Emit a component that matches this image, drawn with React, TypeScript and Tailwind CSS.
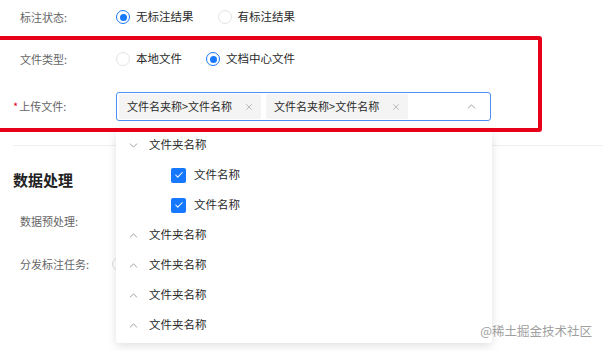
import React from 'react';
import { ChevronDown, ChevronUp, X, Check } from 'lucide-react';

const font = { fontFamily: '"Noto Sans CJK SC", "Noto Sans", sans-serif' };

const Radio = ({ checked, label }: { checked?: boolean; label: string }) => (
  <div className="flex items-center mr-6">
    <span
      className={`w-[14px] h-[14px] rounded-full border flex items-center justify-center ${
        checked ? 'border-[#1677ff]' : 'border-[#e3e3e3]'
      }`}
    >
      {checked && <span className="w-[7px] h-[7px] rounded-full bg-[#1677ff]" />}
    </span>
    <span className="ml-[6px] text-[11.5px] text-[#2a2a2a]">{label}</span>
  </div>
);

const Tag = ({ text }: { text: string }) => (
  <div className="flex items-center h-[25px] bg-[#f4f4f4] rounded-[2px] pl-[8px] pr-[7px] mr-[5px]">
    <span className="text-[11px] text-[#2a2a2a]">{text}</span>
    <X className="w-[10px] h-[10px] ml-[12px] text-[#999]" strokeWidth={1.5} />
  </div>
);

const Folder = ({ open }: { open?: boolean }) => (
  <div className="flex items-center h-[30px] pl-[11px]">
    {open ? (
      <ChevronDown className="w-[13px] h-[13px] text-[#888]" strokeWidth={1.5} />
    ) : (
      <ChevronUp className="w-[13px] h-[13px] text-[#888]" strokeWidth={1.5} />
    )}
    <span className="ml-[9px] text-[11.5px] text-[#2a2a2a]">文件夹名称</span>
  </div>
);

const FileItem = () => (
  <div className="flex items-center h-[30px] pl-[55px]">
    <span className="w-[15px] h-[15px] rounded-[2px] bg-[#1677ff] flex items-center justify-center">
      <Check className="w-[10px] h-[10px] text-white" strokeWidth={2.5} />
    </span>
    <span className="ml-[8px] text-[11.5px] text-[#2a2a2a]">文件名称</span>
  </div>
);

export default function App() {
  return (
    <div className="relative w-[603px] h-[351px] overflow-hidden bg-white" style={font}>
      {/* 标注状态 */}
      <div className="flex items-center h-[34px] pl-5">
        <span className="w-24 text-[11px] text-[#666]">标注状态:</span>
        <Radio checked label="无标注结果" />
        <Radio label="有标注结果" />
      </div>

      {/* highlighted block */}
      <div className="relative z-20 mt-[2px] -ml-[6px] w-[548px] border-4 border-[#e6001a] rounded-[3px] pl-[22px] pb-[7px] pointer-events-none">
        <div className="flex items-center h-[38px]">
          <span className="w-24 text-[11px] text-[#666]">文件类型:</span>
          <Radio label="本地文件" />
          <Radio checked label="文档中心文件" />
        </div>
        <div className="flex items-center mt-[14px] h-[29px]">
          <span className="w-24 text-[11px] text-[#666]">
            <span className="text-[#e6001a] -ml-[7px] mr-[1px]">*</span>上传文件:
          </span>
          <div className="flex items-center w-[375px] h-[29px] border border-[#4d8ef7] rounded-[3px] pl-[2px] pr-[12px] bg-white">
            <Tag text="文件名夹称>文件名称" />
            <Tag text="文件名夹称>文件名称" />
            <ChevronUp className="ml-auto w-[13px] h-[13px] text-[#888]" strokeWidth={1.5} />
          </div>
        </div>
      </div>

      {/* 数据处理 */}
      <div className="mt-[13px] ml-[13px] border-t border-[#f0f0f0]" />
      <div className="ml-[13px] mt-[24px] h-[20px] flex items-center text-[15px] font-bold text-[#222]">
        数据处理
      </div>
      <div className="pl-5 mt-[21px] h-[20px] flex items-center">
        <span className="w-24 text-[11px] text-[#666]">数据预处理:</span>
      </div>
      <div className="pl-5 mt-[23px] h-[20px] flex items-center">
        <span className="w-[92px] text-[11px] text-[#666]">分发标注任务:</span>
        <span className="w-[14px] h-[14px] rounded-full border border-[#ddd]" />
      </div>

      {/* dropdown tree */}
      <div className="absolute z-10 left-[116px] top-[130px] w-[376px] bg-white rounded-[3px] shadow-[0_3px_10px_rgba(0,0,0,0.12)] pb-[3px]">
        <Folder open />
        <FileItem />
        <FileItem />
        <Folder />
        <Folder />
        <Folder />
        <Folder />
      </div>

      {/* watermark */}
      <div className="absolute z-30 right-[11px] top-[322px] text-[12.5px] text-[#a0a0a0]">
        @稀土掘金技术社区
      </div>
    </div>
  );
}
